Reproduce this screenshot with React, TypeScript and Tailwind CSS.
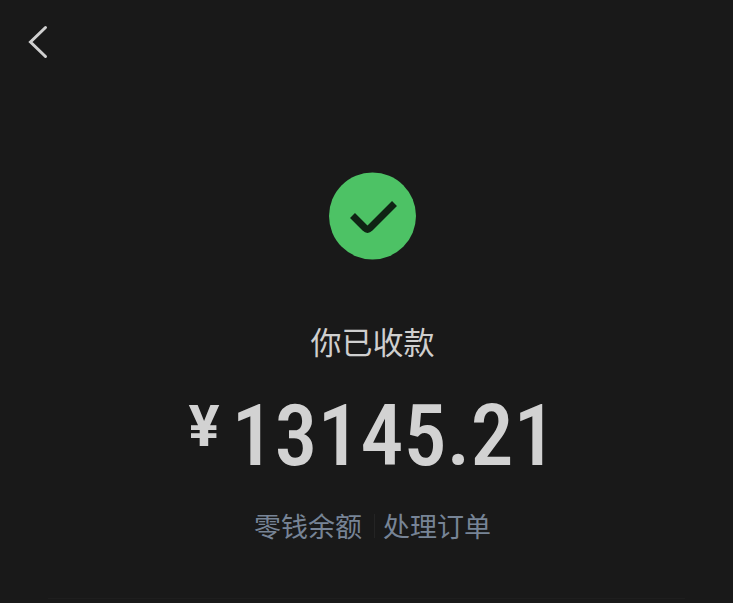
interface AccountLink {
  label: string;
  href: string;
}

const links: AccountLink[] = [
  { label: '零钱余额', href: '#balance' },
  { label: '处理订单', href: '#orders' },
];

export default function App() {
  return (
    <div className="flex min-h-screen flex-col bg-[#191919] font-['Noto_Sans_CJK_SC',sans-serif]">
      <header className="px-6 pt-5">
        <button type="button" aria-label="返回" className="block text-[#d0d0d0]">
          <svg className="h-11 w-7" viewBox="0 0 28 44" fill="none" stroke="currentColor" strokeWidth="3" strokeLinecap="round">
            <path d="M21.5 7.5 L6.5 22 L21.5 36.5" />
          </svg>
        </button>
      </header>

      <main className="flex flex-col items-center pt-27 pl-3">
        <svg className="size-22" viewBox="0 0 88 88" fill="none">
          <circle cx="43.5" cy="44" r="43.5" fill="#4dc265" />
          <path d="M23.5 43.5 L36 56 Q38.5 58.5 41 56 L65.5 31.5" stroke="#0f2414" strokeWidth="7" />
        </svg>

        <h1 className="mt-14 text-[31px] leading-[50px] text-[#cfcfcf]">你已收款</h1>

        <p className="mt-[18px] flex items-start text-[#d2d2d2]">
          <span className="mr-3 font-['Roboto',sans-serif] text-[58px] leading-21 font-bold">¥</span>
          <span className="font-['Roboto_Condensed','Roboto',sans-serif] text-[86px] leading-26 font-medium">13145.21</span>
        </p>

        <nav className="mt-5 flex items-center text-[27px] leading-9 text-[#778496]">
          {links.map((link, i) => (
            <a
              key={link.label}
              href={link.href}
              className={i > 0 ? 'flex items-center before:mr-2 before:ml-3 before:h-6 before:w-px before:bg-[#242424]' : ''}
            >
              {link.label}
            </a>
          ))}
        </nav>
      </main>

      <hr className="mx-12 mt-auto mb-1 border-[#1e1e1e]" />
    </div>
  );
}
